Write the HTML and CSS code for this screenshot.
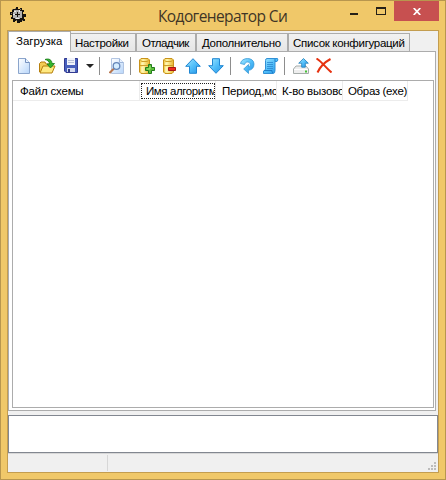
FILE: index.html
```
<!DOCTYPE html>
<html lang="ru">
<head>
<meta charset="utf-8">
<title>Кодогенератор Си</title>
<link rel="stylesheet" href="styles.css">
</head>
<body>
<svg class="defs" width="0" height="0" aria-hidden="true">
  <defs>
    <linearGradient id="blue" x1="0" y1="0" x2="1" y2="1"><stop offset="0" stop-color="#a4e8ff"/><stop offset=".5" stop-color="#52bffa"/><stop offset="1" stop-color="#2492e4"/></linearGradient>
    <linearGradient id="gold" x1="0" x2="1" y1="0" y2="0"><stop offset="0" stop-color="#efc338"/><stop offset=".35" stop-color="#fff6a8"/><stop offset="1" stop-color="#e9b52c"/></linearGradient>
    <linearGradient id="paper" x1="0" y1="0" x2="1" y2="1"><stop offset="0" stop-color="#fff"/><stop offset="1" stop-color="#b8d6fa"/></linearGradient>
    <g id="db"><path d="M3 .5h7l1.500 1.500v12L10 15.500H3L1.500 14V2z" fill="url(#gold)" stroke="#c8921b"/><path d="M2 7.500h9M2.500 2.500L4 3.500h5L10.500 2.500" fill="none" stroke="#cf9f2a"/><path d="M4 9v5M4 4.500V7" stroke="#fffbd0"/></g>
  </defs>
</svg>
<div class="window">
  <header class="titlebar">
    <svg class="gear" width="16" height="16" viewBox="0 0 16 16" shape-rendering="crispEdges">
      <path d="M6 0h2v2h2V1h2v2h2v2h-1v2h3v3h-2v2h1v2h-3v1h-2v1H7v-2H5v1H3v-3H1v-2h1V8H0V5h2V3h1V2h3z" fill="#17130e"/>
      <path d="M4 3h6v1h2v7h-2v1H5v-1H3V5h1z" fill="#b2b1b1"/>
      <path d="M4 4h2v1H4zM3 7h2v1H3zM6 11h3v1H6zM9 3h1v2H9z" fill="#eee"/>
      <path d="M7 5h1v2h2v1H8v2H7V8H5V7h2z" fill="#17130e"/>
      <path d="M2 2h1v1H2zM1 6h1v1H1zM5 1h1v1H5zM10 2h1v1h-1zM12 13h1v1h-1zM6 13h1v1H6z" fill="#8d8065"/>
    </svg>
    <h1>Кодогенератор Си</h1>
    <div class="controls"><span class="min"></span><span class="max"></span><span class="close"><svg width="8" height="7" viewBox="0 0 8 7"><path d="M.7 0l6.600 7M7.300 0L.7 7" stroke="#fff" stroke-width="1.700"/></svg></span></div>
  </header>
  <main class="client">
    <nav class="tabs">
      <div class="tab active"><span>Загрузка</span></div>
      <div class="tab t2"><span>Настройки</span></div>
      <div class="tab t3"><span>Отладчик</span></div>
      <div class="tab t4"><span>Дополнительно</span></div>
      <div class="tab t5"><span>Список конфигураций</span></div>
    </nav>
    <section class="pane">
      <div class="toolbar">
        <svg class="new" width="16" height="16" viewBox="0 0 16 16"><path d="M3.500 .5h7l4 4v11h-11z" fill="url(#paper)" stroke="#8ba5cc"/><path d="M10.500 .5v4h4" fill="#e8f2ff" stroke="#7591bf"/></svg>
        <svg class="open" width="17" height="16" viewBox="0 0 17 16"><path d="M.5 14V5.500L2 4h4l1 2h6v3" fill="#f4cc55" stroke="#b67f0d"/><path d="M1 15l3-7h12l-3 7z" fill="#ffe981" stroke="#b67f0d"/><path d="M6 1.500c4-1.500 7 .5 7 4h2.500L11.500 10 8 6h2.500C10.500 3.500 8.500 2 6 1.500z" fill="#35b62d" stroke="#167b18" stroke-width=".8"/></svg>
        <svg class="save" width="14" height="15" viewBox="0 0 14 15"><path d="M.5 .5h13v14H2L.5 13z" fill="#4860bd" stroke="#323a91"/><path d="M3 0h8v7H3z" fill="#f1f3fa"/><path d="M4 2.500h6M4 4.500h6" stroke="#b9c1d8"/><path d="M3 10h8v4H3z" fill="#d4daf0"/><path d="M4 11h2v3H4z" fill="#303c87"/></svg>
        <i class="drop"></i>
        <i class="sep s1"></i>
        <svg class="preview" width="16" height="16" viewBox="0 0 16 16"><path d="M2.500 .5h8l4 4v11h-12z" fill="url(#paper)" stroke="#b2c5e2"/><path d="M10.500 .5v4h4" fill="#e8f2ff" stroke="#9eb6da"/><path d="M5 10.500L.5 15" stroke="#b87850" stroke-width="2"/><circle cx="7.500" cy="8" r="3.300" fill="#d5edff" stroke="#6485b8" stroke-width="1.300"/></svg>
        <i class="sep s2"></i>
        <svg class="add" width="17" height="16" viewBox="0 0 17 16"><use href="#db" x="-1"/><path d="M9.500 6.500h3v3h3v3h-3v3h-3v-3h-3v-3h3z" fill="#5dbf39" stroke="#237c1b"/><path d="M11 8v3H8" stroke="#a2e879" fill="none"/></svg>
        <svg class="remove" width="16" height="16" viewBox="0 0 16 16"><use href="#db" x="-1"/><path d="M5.500 9.500h7v3h-7z" fill="#ef2b20" stroke="#a61712"/></svg>
        <svg class="up" width="16" height="16" viewBox="0 0 16 16"><path d="M8 .7l7.300 7.600h-3.800v7h-7v-7H.7z" fill="url(#blue)" stroke="#1f86d2"/></svg>
        <svg class="down" width="16" height="16" viewBox="0 0 16 16"><path d="M8 15.300L.7 7.700h3.800v-7h7v7h3.800z" fill="url(#blue)" stroke="#1f86d2"/></svg>
        <i class="sep s3"></i>
        <svg class="refresh" width="15" height="16" viewBox="0 0 15 16"><path d="M.5 5.500C1.500-1.200 14-1.200 14 6c0 4-2.500 6-5.500 6.300v3.200L3.700 11l4.800-4.500V9C11 8.800 11 4 7.500 4 5.500 4 5 5.500 4.500 6.500z" fill="url(#blue)" stroke="#3b9bd5" stroke-width=".8"/></svg>
        <svg class="scroll" width="17" height="16" viewBox="0 0 17 16"><path d="M3.500 11V2.500Q3.500 .5 5 .5h10.500q1 1.500-.5 3h-2v9q0 3-2 3h-9.500q-1-3 2-4z" fill="url(#blue)" stroke="#3190d6"/><path d="M13 3.500V1M2 12.500h8q-.5 2 1 2.500" fill="none" stroke="#1d7dc8"/><path d="M5 4.500h6M5 6.500h6M5 8.500h6M5 10.500h6" stroke="#2b86cf" stroke-width=".8"/></svg>
        <i class="sep s4"></i>
        <svg class="upload" width="16" height="16" viewBox="0 0 16 16"><path d="M3 8h10l2.500 3v4.500H.5V11z" fill="#eee" stroke="#a5aba9"/><path d="M1 11.500h14" stroke="#fff"/><path d="M12 12.500h2v2h-2z" fill="#45bf35"/><path d="M10.500 .5l4.800 4.700h-3v4H8.700v-4h-3z" fill="url(#blue)" stroke="#207eb9" stroke-width=".8"/></svg>
        <svg class="delete" width="16" height="15" viewBox="0 0 16 15"><path d="M.5 .5C6 4 10 10 15.500 14.500M14.500 1C9 4 4 9 1.500 14.500" fill="none" stroke="#e63210" stroke-width="2"/></svg>
      </div>
      <div class="list">
        <div class="columns">
          <div class="col c1"><span>Файл схемы</span></div>
          <div class="col c2"><span>Имя алгоритм</span></div>
          <div class="col c3"><span>Период,мс</span></div>
          <div class="col c4"><span>К-во вызово</span></div>
          <div class="col c5"><span>Образ (exe)</span></div>
        </div>
      </div>
    </section>
    <div class="output"></div>
    <footer class="status"><div class="cell"></div><svg class="grip" width="8" height="8" viewBox="0 0 8 8" shape-rendering="crispEdges"><path d="M6 0h2v2H6zM3 3h2v2H3zM6 3h2v2H6zM0 6h2v2H0zM3 6h2v2H3zM6 6h2v2H6z" fill="#bcbcbc"/></svg></footer>
  </main>
</div>
</body>
</html>
```
FILE: styles.css
```
* { box-sizing: border-box; }
body { margin: 0; font: 11.5px/14px "Liberation Sans", Arial, sans-serif; color: #000; }
.defs { position: absolute; }
.window { width: 446px; height: 480px; padding: 0 6px 6px; border: 1px solid #b8964e; background: #f0c869; }
.titlebar { display: flex; height: 29px; }
.gear { flex: none; margin: 6px 0 0 3px; }
h1 { margin: 4px 0 0; padding-left: 132px; font: 15.5px/22px "Open Sans", "Noto Sans", sans-serif; letter-spacing: -0.6px; color: #403526; white-space: nowrap; }
.controls { display: flex; margin-left: auto; }
.min { width: 8px; height: 2px; margin: 12px 18px 0 0; background: #252018; }
.max { width: 10px; height: 8px; margin: 6px 8px 0 0; border: 1px solid #252018; border-top-width: 2px; }
.close { display: flex; align-items: center; justify-content: center; width: 45px; height: 20px; background: #c75050; }
.client { display: flex; flex-direction: column; height: 443px; border: 1px solid #c39d50; background: #f0f0f0; }
.tabs { display: flex; align-items: flex-end; height: 20px; }
.tab { height: 18px; border: 1px solid #acacac; border-bottom: 0; background: linear-gradient(#f1f1f1, #e6e6e6); white-space: nowrap; padding: 2px 0 0 5px; }
.tab.active { width: 63px; height: 21px; margin-bottom: -1px; position: relative; background: #fff; padding: 2px 0 0 7px; }
.tab.t2 { width: 65px; border-left: 0; padding-left: 4px; letter-spacing: -.3px; }
.t3 { width: 60px; letter-spacing: -.55px; }
.t4 { width: 92px; letter-spacing: -.3px; }
.tab.t5 { width: 122px; padding-left: 4px; letter-spacing: -.3px; }
.pane { display: flex; flex-direction: column; width: 428px; height: 360px; border: 1px solid #acacac; background: #fff; padding: 0 1px 2px 3px; }
.toolbar { display: flex; height: 28px; padding-top: 6px; }
.toolbar svg { flex: none; }
.new { margin-left: 3px; }
.open { margin-left: 8px; }
.save { margin-left: 8px; }
.drop { margin: 6px 0 0 8px; width: 0; height: 0; border: 4px solid transparent; border-top-color: #252525; border-bottom: 0; }
.sep { width: 1px; height: 18px; margin-top: -1px; background: #8d8d8d; }
.s1 { margin-left: 5px; }
.preview { margin-left: 9px; }
.s2 { margin-left: 5px; }
.add { margin-left: 8px; }
.remove { margin-left: 7px; }
.up { margin-left: 6px; }
.down { margin-left: 7px; }
.s3 { margin-left: 6px; }
.refresh { margin-left: 9px; }
.scroll { margin-left: 7px; }
.s4 { margin-left: 5px; }
.upload { margin-left: 8px; }
.delete { margin-left: 7px; }
.list { flex: 1; border: 1px solid #acacac; }
.columns { display: flex; height: 20px; width: 395px; }
.col { flex: none; height: 20px; border: 0 solid #ececec; border-width: 0 1px 1px 0; padding: 3px 0 0 5px; overflow: hidden; white-space: nowrap; letter-spacing: -.2px; }
.col span { display: block; overflow: hidden; }
.c1 { width: 127px; padding-left: 7px; }
.c2 { width: 76px; padding: 2px 1px 0 1px; letter-spacing: -.4px; }
.c2 span { width: 74px; height: 16px; border: 1px dotted #222; padding-left: 4px; }
.c3 { width: 61px; padding-left: 6px; }
.c4 { width: 66px; }
.c5 { width: 65px; letter-spacing: -.35px; }
.output { height: 38px; margin-top: 4px; border: 1px solid #828790; background: #fff; }
.status { display: flex; flex: 1; justify-content: space-between; border-top: 1px solid #d7d7d7; padding: 1px 1px 1px 0; }
.cell { width: 100px; border-right: 1px solid #d7d7d7; }
.grip { align-self: flex-end; margin: 0 1px 1px 0; }
```
